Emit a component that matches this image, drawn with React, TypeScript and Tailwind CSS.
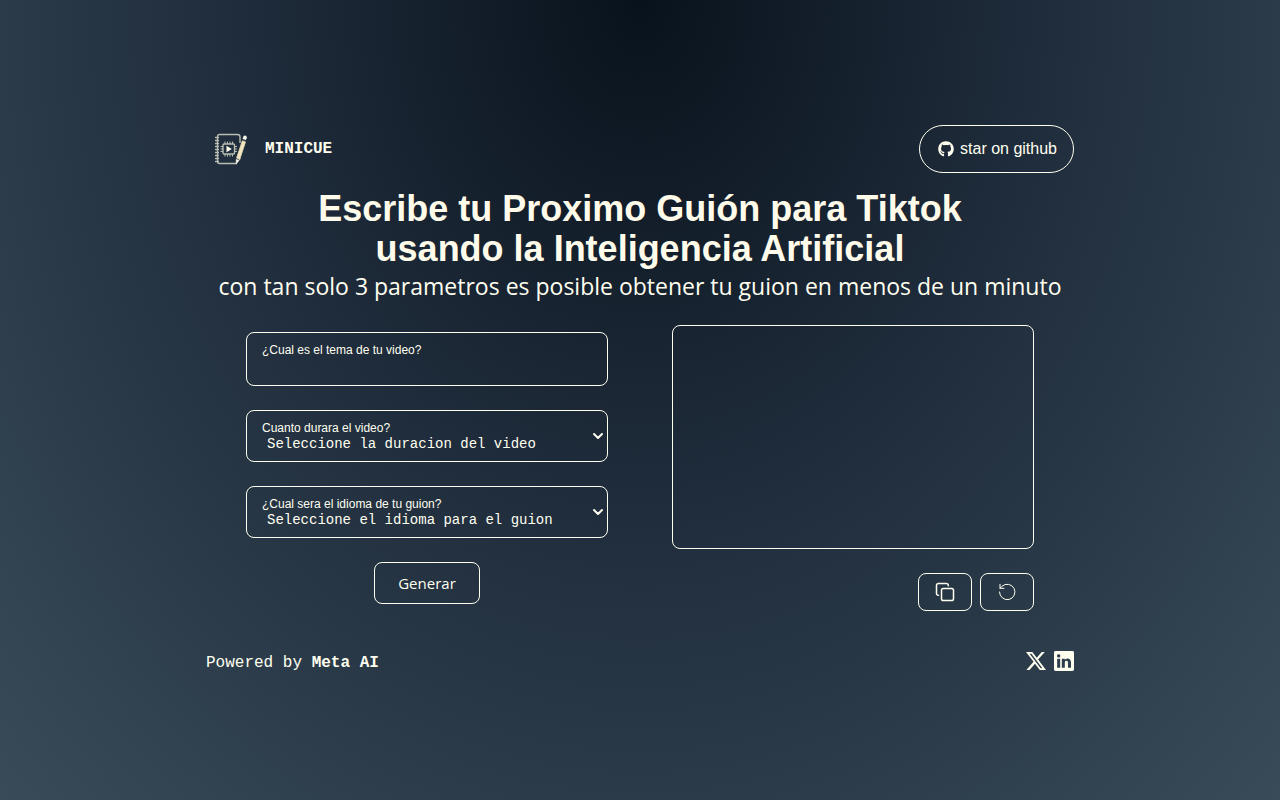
import { useState } from 'react';
import type { ReactNode } from 'react';
import { FaGithub } from 'react-icons/fa6';
import { BsLinkedin, BsTwitterX } from 'react-icons/bs';
import { ChevronDown } from 'lucide-react';

function Logo() {
  const rings = [5.5, 8.5, 11.5, 14.5, 17.5, 20.5, 23.5, 26.5, 29.5];
  return (
    <svg viewBox="0 0 34 34" className="size-[34px]" fill="none" stroke="#b9bdb2" strokeWidth="1.4" aria-hidden="true">
      <path d="M4.500 2.500H22.500q2.500 0 2.500 2.500V11M22 31.500H4.500Q2.500 31.500 2.500 29V5Q2.500 2.500 4.500 2.500M24.500 24.500V28" />
      {rings.map((y) => (
        <path key={y} d={`M0 ${y}h4`} />
      ))}
      <rect x="8" y="12" width="11.500" height="10" rx="1" />
      <path
        d="M10 9.500v2.500M12.500 9.500v2.500M15 9.500v2.500M17.500 9.500v2.500M10 22v2.500M12.500 22v2.500M15 22v2.500M17.500 22v2.500M5.500 14.500H8M5.500 17H8M5.500 19.500H8M19.500 14.500H22M19.500 17H22M19.500 19.500H22"
        strokeWidth="1"
      />
      <path d="M11.500 13.700v6.600l5.300-3.300z" fill="#fffdee" stroke="none" />
      <path d="M27.300 8.800l3.200 1.100-5.700 17.300-3.200-1.100z" fill="#f3e5c0" stroke="#e8dcb8" strokeWidth="0.800" />
      <path d="M27.900 6.700l.9-2.500q1.500-1 2.900.8l-.9 2.700z" fill="#fffdee" stroke="#fffdee" strokeWidth="0.600" />
      <path d="M21.200 27.400l2.900 1-2.800 3.400z" fill="#fffdee" stroke="#fffdee" strokeWidth="0.600" />
    </svg>
  );
}

function CopyIcon() {
  return (
    <svg viewBox="0 0 24 24" className="size-6" fill="none" stroke="currentColor" strokeWidth="1.500" strokeLinecap="round" strokeLinejoin="round" aria-hidden="true">
      <rect x="8.500" y="8.500" width="12" height="12" rx="1.800" />
      <path d="M5.500 15.300h-.2a1.800 1.800 0 0 1-1.800-1.800V5.300a1.800 1.800 0 0 1 1.800-1.800h8.200a1.800 1.800 0 0 1 1.800 1.800v.4" />
    </svg>
  );
}

function ResetIcon() {
  return (
    <svg viewBox="0 0 24 24" className="size-6" fill="none" stroke="currentColor" strokeWidth="1" strokeLinecap="round" strokeLinejoin="round" aria-hidden="true">
      <path d="M4.500 12a7.700 7.700 0 1 0 2.600-5.800L5 8.300" />
      <path d="M5 4.300v4h4" />
    </svg>
  );
}

type SelectFieldProps = {
  id: string;
  label: string;
  placeholder: string;
  options: string[];
};

function SelectField({ id, label, placeholder, options }: SelectFieldProps) {
  return (
    <div className="relative h-[52px] rounded-lg border border-[#fffff0]">
      <label htmlFor={id} className="pointer-events-none absolute left-[15px] top-[9px] text-xs">
        {label}
      </label>
      <select
        id={id}
        defaultValue=""
        className="h-full w-full appearance-none rounded-lg bg-transparent pb-2 pl-5 pr-6 pt-6 font-['Liberation_Mono','Courier_New',monospace] text-sm/4 outline-none"
      >
        <option value="" disabled>
          {placeholder}
        </option>
        {options.map((option) => (
          <option key={option} className="bg-[#1c2838]">
            {option}
          </option>
        ))}
      </select>
      <ChevronDown className="pointer-events-none absolute right-px top-[17px] size-4" strokeWidth={3} />
    </div>
  );
}

function IconButton({ label, onClick, children }: { label: string; onClick: () => void; children: ReactNode }) {
  return (
    <button
      type="button"
      aria-label={label}
      onClick={onClick}
      className="flex h-[38px] w-[54px] items-center justify-center rounded-lg border border-[#fffff0]"
    >
      {children}
    </button>
  );
}

export default function App() {
  const [topic, setTopic] = useState('');
  const [script, setScript] = useState('');

  return (
    <div className="flex min-h-screen items-center justify-center bg-[radial-gradient(ellipse_at_top,#09121c,#1b2735_35%,#233141_53%,#2b3b49_71%,#394b59)] px-4 font-['Liberation_Sans',Arial,sans-serif] text-[#fffff0]">
      <div className="w-full max-w-[868px]">
        <header className="flex items-center justify-between">
          <div className="flex items-center gap-4 pl-[9px]">
            <Logo />
            <span className="font-['Liberation_Mono','Courier_New',monospace] font-bold">MINICUE</span>
          </div>
          <a href="#github" className="flex h-12 items-center gap-1 rounded-full border border-[#fffff0] px-4">
            <FaGithub className="size-5 p-0.5" />
            star on github
          </a>
        </header>

        <main>
          <div className="pt-4 text-center">
            <h1 className="text-4xl font-bold text-[#fffbeb]">
              Escribe tu Proximo Guión para Tiktok
              <br />
              usando la Inteligencia Artificial
            </h1>
            <p className="font-['Open_Sans','Noto_Sans',sans-serif] text-[23px]/[34px]">
              con tan solo 3 parametros es posible obtener tu guion en menos de un minuto
            </p>
          </div>

          <div className="mt-[22px] grid gap-16 px-10 md:grid-cols-2">
            <form className="flex flex-col gap-6 pt-[7px]" onSubmit={(event) => event.preventDefault()}>
              <div className="relative h-[54px] rounded-lg border border-[#fffff0]">
                <label htmlFor="tema" className="pointer-events-none absolute left-[15px] top-[9px] text-xs">
                  ¿Cual es el tema de tu video?
                </label>
                <input
                  id="tema"
                  value={topic}
                  onChange={(event) => setTopic(event.target.value)}
                  className="h-full w-full rounded-lg bg-transparent px-4 pb-1 pt-6 text-sm outline-none"
                />
              </div>
              <SelectField
                id="duracion"
                label="Cuanto durara el video?"
                placeholder="Seleccione la duracion del video"
                options={['15 segundos', '30 segundos', '60 segundos']}
              />
              <SelectField
                id="idioma"
                label="¿Cual sera el idioma de tu guion?"
                placeholder="Seleccione el idioma para el guion"
                options={['Español', 'Inglés', 'Portugués']}
              />
              <button
                type="submit"
                className="h-[42px] w-[106px] self-center rounded-lg border border-[#fffff0] font-['Open_Sans','Noto_Sans',sans-serif] text-[15px]"
              >
                Generar
              </button>
            </form>

            <section className="flex flex-col gap-6">
              <textarea
                aria-label="Guion"
                value={script}
                onChange={(event) => setScript(event.target.value)}
                className="h-56 w-full resize-none rounded-lg border border-[#fffff0] bg-transparent p-4 outline-none"
              />
              <div className="flex justify-end gap-2">
                <IconButton label="Copiar" onClick={() => navigator.clipboard.writeText(script)}>
                  <CopyIcon />
                </IconButton>
                <IconButton label="Reiniciar" onClick={() => setScript('')}>
                  <ResetIcon />
                </IconButton>
              </div>
            </section>
          </div>
        </main>

        <footer className="mt-9 flex items-center justify-between font-['Liberation_Mono','Courier_New',monospace]">
          <p className="pt-1">
            Powered by <strong>Meta AI</strong>
          </p>
          <div className="flex gap-2">
            <a href="#x" aria-label="X">
              <BsTwitterX className="size-5" />
            </a>
            <a href="#linkedin" aria-label="LinkedIn">
              <BsLinkedin className="size-5" />
            </a>
          </div>
        </footer>
      </div>
    </div>
  );
}
